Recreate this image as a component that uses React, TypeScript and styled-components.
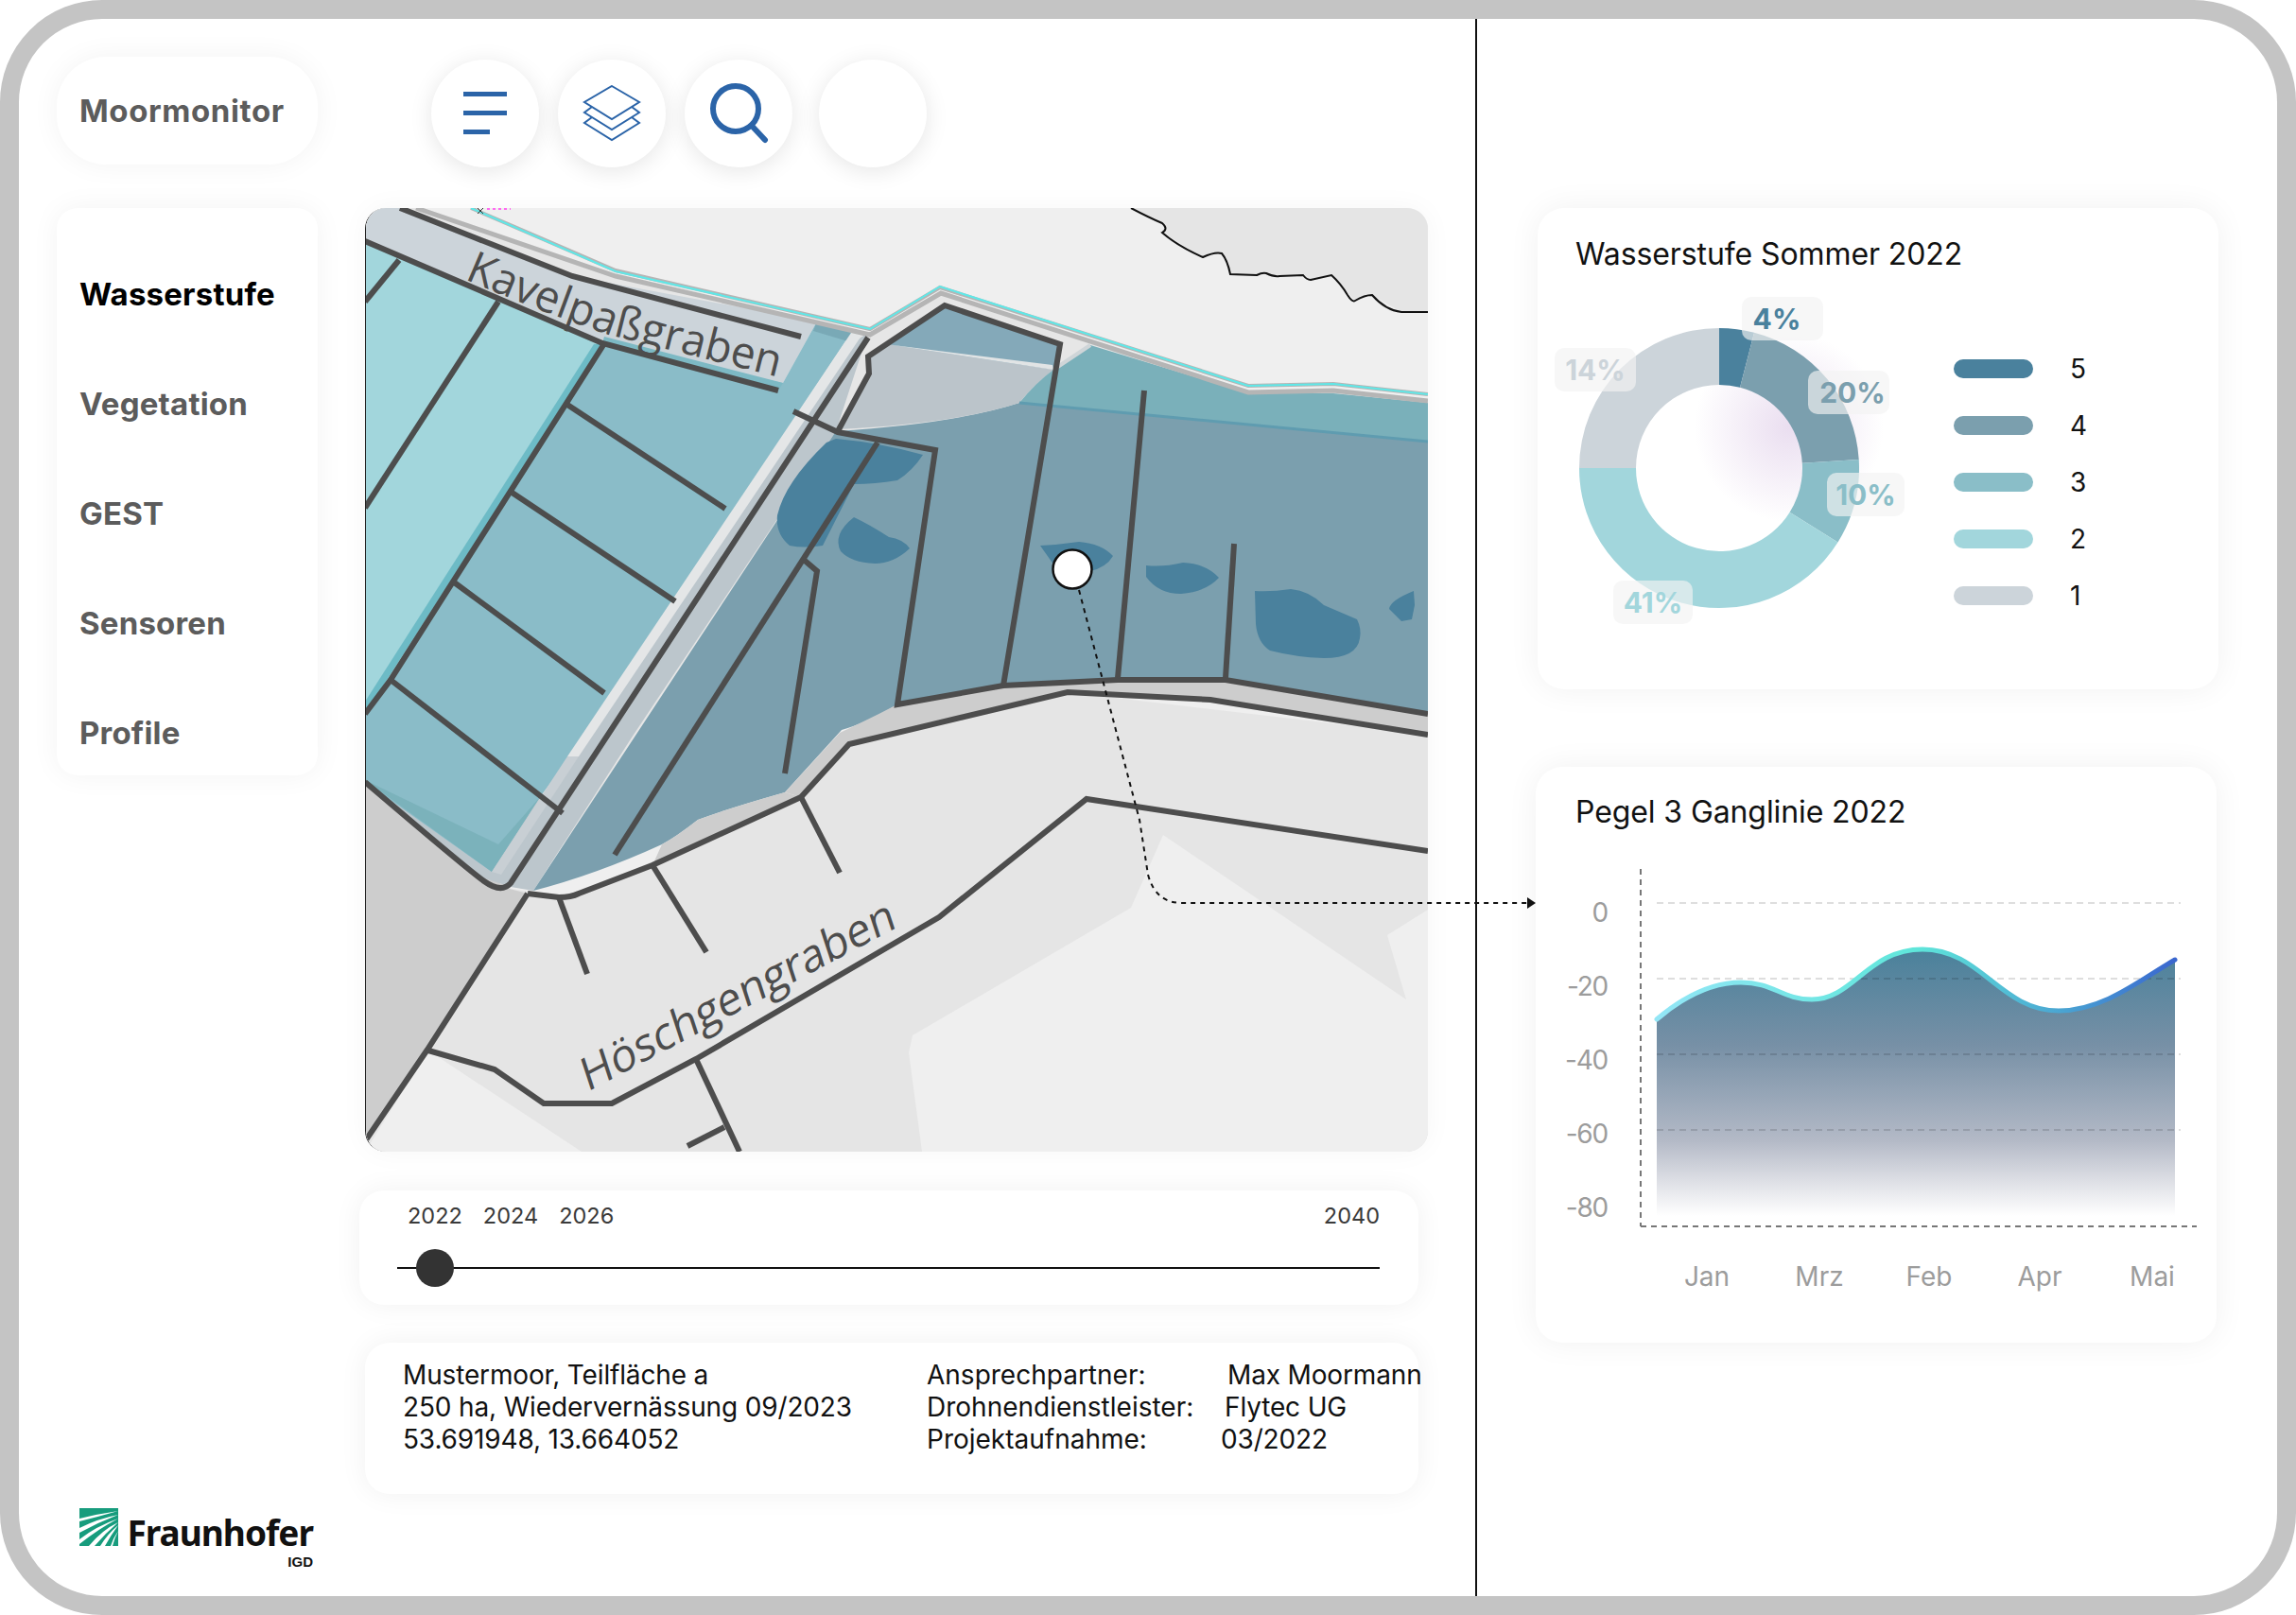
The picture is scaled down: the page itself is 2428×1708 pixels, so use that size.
import React from 'react';
import styled, { createGlobalStyle } from 'styled-components';

const GlobalStyle = createGlobalStyle`
  html, body {
    margin: 0;
    padding: 0;
    background: #fff;
  }
  body {
    width: 2428px;
    height: 1708px;
    overflow: hidden;
    font-family: 'Inter', 'Liberation Sans', sans-serif;
  }
`;

const Frame = styled.div`
  position: relative;
  box-sizing: border-box;
  display: flex;
  width: 2428px;
  height: 1708px;
  background: #fff;
  border: 20px solid #c4c4c4;
  border-radius: 108px;
  overflow: hidden;
`;

const LeftPane = styled.div`
  box-sizing: border-box;
  display: flex;
  flex: none;
  width: 1542px;
  height: 100%;
  padding: 40px 0 0 40px;
  border-right: 2px solid #111;
`;

const Sidebar = styled.aside`
  display: flex;
  flex-direction: column;
  flex: none;
  width: 276px;
`;

const BrandPill = styled.div`
  display: flex;
  align-items: center;
  height: 114px;
  padding-left: 24px;
  background: #fff;
  border-radius: 52px;
  box-shadow: 0 0 30px rgba(0, 0, 0, 0.05);
  color: #5c5c5c;
  font-size: 33px;
  font-weight: 700;
  letter-spacing: 0.6px;
`;

const NavCard = styled.nav`
  box-sizing: border-box;
  display: flex;
  flex-direction: column;
  justify-content: space-between;
  height: 600px;
  margin-top: 46px;
  padding: 68px 0 22px 24px;
  background: #fff;
  border-radius: 22px;
  box-shadow: 0 0 30px rgba(0, 0, 0, 0.05);
`;

const NavItem = styled.a<{ $active?: boolean }>`
  color: ${(p) => (p.$active ? '#000' : '#5c5c5c')};
  font-size: 33px;
  font-weight: 700;
  line-height: 46px;
  letter-spacing: 0.2px;
`;

const LogoBlock = styled.div`
  display: flex;
  flex-direction: column;
  align-items: flex-end;
  width: 249px;
  margin: auto 0 29px 22px;
`;

const LogoRow = styled.div`
  display: flex;
  align-items: flex-end;
  gap: 10px;
`;

const LogoWord = styled.span`
  color: #111;
  font-family: 'Noto Sans', 'Liberation Sans', sans-serif;
  font-size: 37px;
  font-weight: 700;
  line-height: 28px;
  letter-spacing: -1px;
`;

const LogoSub = styled.span`
  margin-top: 9px;
  color: #111;
  font-family: 'Liberation Sans', sans-serif;
  font-size: 15px;
  font-weight: 700;
  line-height: 15px;
`;

const Main = styled.main`
  display: flex;
  flex-direction: column;
  flex: none;
  width: 1130px;
  margin-left: 50px;
  padding-top: 3px;
`;

const Toolbar = styled.div`
  display: flex;
  gap: 20px;
  margin-left: 70px;
`;

const RoundButton = styled.button<{ $gapBefore?: number }>`
  display: flex;
  align-items: center;
  justify-content: center;
  width: 114px;
  height: 114px;
  margin-left: ${(p) => p.$gapBefore ?? 0}px;
  padding: 0;
  background: #fff;
  border: none;
  border-radius: 50%;
  box-shadow: 0 4px 24px rgba(0, 0, 0, 0.1);
`;

const MapCard = styled.div`
  width: 1124px;
  height: 998px;
  margin-top: 43px;
  border-radius: 22px;
  overflow: hidden;
  border-left: 1px solid #222;
  box-sizing: border-box;
  box-shadow: 0 0 30px rgba(0, 0, 0, 0.04);

  svg {
    display: block;
  }
`;

const SliderCard = styled.div`
  box-sizing: border-box;
  width: 1120px;
  height: 121px;
  margin: 41px 0 0 -6px;
  padding: 13px 41px 0 40px;
  background: #fff;
  border-radius: 26px;
  box-shadow: 0 0 30px rgba(0, 0, 0, 0.06);
`;

const YearRow = styled.div`
  display: flex;
  gap: 22px;
  padding-left: 11px;
  color: #3a3a3a;
  font-size: 23.5px;
  line-height: 28px;
`;

const YearEnd = styled.span`
  margin-left: auto;
`;

const Track = styled.div`
  position: relative;
  height: 2px;
  margin-top: 40px;
  background: #111;
`;

const Thumb = styled.div`
  position: absolute;
  top: -19px;
  left: 20px;
  width: 40px;
  height: 40px;
  background: #333;
  border-radius: 50%;
`;

const InfoCard = styled.div`
  box-sizing: border-box;
  display: flex;
  width: 1114px;
  height: 160px;
  margin-top: 40px;
  padding: 17px 0 0 40px;
  background: #fff;
  border-radius: 26px;
  box-shadow: 0 0 30px rgba(0, 0, 0, 0.06);
  color: #111;
  font-size: 28px;
  line-height: 34px;
  letter-spacing: -0.15px;
  white-space: nowrap;
`;

const InfoColumn = styled.div`
  flex: none;
  width: 554px;
`;

const InfoRow = styled.div`
  display: flex;
`;

const InfoLabel = styled.span`
  flex: none;
  width: 315px;
  letter-spacing: 0;
`;

const InfoValue = styled.span<{ $shift: number }>`
  margin-left: ${(p) => p.$shift}px;
`;

const RightPane = styled.div`
  display: flex;
  flex-direction: column;
  flex: 1;
  padding: 200px 0 0 64px;
`;

const PanelTitle = styled.h2`
  margin: 0;
  color: #111;
  font-size: 32px;
  font-weight: 400;
  line-height: 40px;
  letter-spacing: -0.1px;
`;

const DonutCard = styled.section`
  box-sizing: border-box;
  width: 720px;
  height: 509px;
  padding: 29px 0 0 40px;
  background: #fff;
  border-radius: 28px;
  box-shadow: 0 0 34px rgba(0, 0, 0, 0.06);
`;

const DonutRow = styled.div`
  display: flex;
  gap: 46px;
  margin: 25px 0 0 -22px;
`;

const DonutWrap = styled.div`
  position: relative;
  flex: none;
  width: 376px;
  height: 346px;

  svg {
    display: block;
  }
`;

const PercentChip = styled.span<{ $x: number; $y: number; $w: number; $color: string; $nudge: number }>`
  position: absolute;
  left: ${(p) => p.$x}px;
  top: ${(p) => p.$y}px;
  box-sizing: border-box;
  display: flex;
  align-items: center;
  justify-content: center;
  width: ${(p) => p.$w}px;
  height: 46px;
  padding-left: ${(p) => Math.max(p.$nudge, 0)}px;
  padding-right: ${(p) => Math.max(-p.$nudge, 0)}px;
  background: rgba(243, 243, 243, 0.66);
  border-radius: 10px;
  color: ${(p) => p.$color};
  font-size: 30px;
  font-weight: 700;
`;

const Legend = styled.ul`
  display: flex;
  flex-direction: column;
  margin: 46px 0 0;
  padding: 0;
  list-style: none;
`;

const LegendRow = styled.li`
  display: flex;
  align-items: center;
  gap: 39px;
  height: 60px;
  color: #111;
  font-size: 28px;
`;

const LegendSwatch = styled.span<{ $color: string }>`
  width: 84px;
  height: 20px;
  background: ${(p) => p.$color};
  border-radius: 10px;
`;

const LineCard = styled.section`
  box-sizing: border-box;
  width: 720px;
  height: 609px;
  margin: 82px 0 0 -2px;
  padding: 28px 0 0 42px;
  background: #fff;
  border-radius: 28px;
  box-shadow: 0 0 34px rgba(0, 0, 0, 0.06);

  svg {
    display: block;
    margin: 20px 0 0 -42px;
  }
`;

const ChartLabel = styled.text<{ $tick?: boolean }>`
  fill: #9c9c9c;
  font-family: 'Inter', 'Liberation Sans', sans-serif;
  font-size: 28px;
  letter-spacing: ${(p) => (p.$tick ? '-1.2px' : '0')};
`;

const MapLabel = styled.text`
  fill: #4d4d4d;
  font-family: 'Open Sans', 'Noto Sans', sans-serif;
  font-size: 47px;
`;

const ConnectorLayer = styled.svg`
  position: absolute;
  top: -20px;
  left: -20px;
  pointer-events: none;
`;

const DITCH = '#4d4d4d';

const ditchLines = [
  '423,220 605,292 847,356',
  '386,255 637,363 823,413',
  '422,275 386,319',
  '527,319 386,537',
  '638,365 413,719 386,755',
  '600,428 767,538',
  '540,520 714,636',
  '479,615 639,733',
  '413,719 595,860',
  '839,435 886,457 989,476 949,745 1061,725 1182,719 1296,719 1510,755',
  '886,456 919,395 918,377 999,323 1121,364 1061,725',
  '928,468 650,904',
  '850,592 864,604 830,818',
  '1210,413 1182,717',
  '1305,575 1296,717',
  '591,949 621,1030',
  '690,915 747,1007',
  '847,843 888,923',
  '736,1120 782,1218',
  '766,1192 727,1212',
];

const MapDrawing: React.FC = () => (
  <svg width={1123} height={998} viewBox="387 220 1123 998">
    {/* base land */}
    <rect x={386} y={220} width={1124} height={998} fill="#efefef" />
    <path
      d="M1196 220 L1231 238 L1229 246 L1272 272 Q1285 266 1292 268 L1301 290 L1329 291 L1339 289 L1353 292 L1378 291 L1386 296 L1408 291 L1433 318 L1451 312 L1482 330 L1510 330 L1510 220 Z"
      fill="#e5e5e5"
    />
    <path
      d="M1196 220 Q1215 230 1229 236 Q1236 242 1229 246 Q1245 260 1272 272 Q1285 266 1292 268 Q1298 275 1301 290 L1329 291 Q1335 288 1339 289 Q1347 293 1353 292 L1378 291 Q1382 296 1386 296 L1408 291 Q1418 300 1425 312 Q1430 320 1433 318 Q1443 312 1451 312 Q1465 328 1482 330 L1510 330"
      fill="none"
      stroke="#111"
      strokeWidth={2}
    />

    {/* lower land and pale patches */}
    <path
      d="M386 827 L537 939 L591 949 L612 945 L847 843 L898 787 L1129 732 L1510 777 L1510 1218 L386 1218 Z"
      fill="#e5e5e5"
    />
    <path d="M1230 883 L1487 1057 L1467 989 L1510 962 L1510 1218 L975 1218 L961 1113 L965 1095 L1196 960 Z" fill="#efefef" />
    <path d="M453 1111 L615 1218 L386 1218 Z" fill="#efefef" />
    <path d="M1186 738 L1280 742 L1410 763 L1510 777 L1510 740 L1186 720 Z" fill="#cdcdcd" />
    <path d="M386 827 L535 939 L558 945 L452 1110 L386 1207 Z" fill="#cdcdcd" />

    {/* river margin */}
    <path d="M440 220 L651 292 L920 352 L995 309 L1320 414 L1410 412 L1510 423 L1510 470 L900 640 L540 938 L386 827 L386 220 Z" fill="#e6e6e6" />

    {/* strip below the first ditch */}
    <path d="M386 220 L423 220 L605 292 L864 340 L828 405 L637 363 L386 255 Z" fill="#ccd4da" />

    {/* road along the main ditch */}
    <path d="M898 365 L918 352 L884 456 L668 780 L564 942 L540 938 L500 925 L386 827 L574 843 Z" fill="#bcc6cc" />

    {/* fields left of the road */}
    <path d="M386 255 L637 363 L386 755 Z" fill="#a2d6dc" />
    <path d="M638 364 L828 405 L864 340 L900 352 L603 800 L571 843 L520 922 L386 827 L386 755 Z" fill="#8abcc8" />
    <path d="M386 825 L527 893 L571 843 L520 922 Z" fill="#7bb2bb" />
    <path d="M386 755 L638 364 L628 364 L386 742 Z" fill="#60b4c0" opacity={0.8} />
    <path d="M637 363 L823 413 L828 405 L639 356 Z" fill="#7db9c4" />
    <path d="M864 340 L912 352 L900 362 L860 350 Z" fill="#79a9b6" />
    <path d="M900 352 L913 352 L612 800 L600 800 Z" fill="#e4e6e7" />
    <path d="M600 800 L612 800 L530 925 L520 922 Z" fill="#c8cfd4" />

    {/* main field */}
    <path
      d="M1078 426 L1510 467 L1510 755 L1296 719 L1182 719 L1061 726 L949 745 Q915 765 890 772 L830 838 Q770 855 738 867 Q715 885 700 893 Q630 925 564 942 L884 456 Q1010 448 1078 426 Z"
      fill="#7b9fae"
    />
    <path d="M847 843 L830 838 Q770 855 738 867 Q715 885 700 893 L690 915 Z" fill="#cdcdcd" />
    <path d="M949 745 L1061 726 L1182 719 L1296 719 L1510 755 L1510 777 L1280 740 L1129 732 L898 787 L847 843 L830 838 L888 775 Q920 760 949 745 Z" fill="#cdcdcd" />

    {/* upper field, wedge and teal band */}
    <path d="M999 323 L1121 364 L1114 391 L937 366 L918 378 Z" fill="#84a9b9" />
    <path d="M918 378 L919 395 L886 454 Q1010 448 1078 426 Q1090 410 1114 391 L937 364 Z" fill="#bbc4ca" />
    <path d="M937 364 L1114 391 L1113 386 Z" fill="#e1e4e5" />
    <path d="M1153 365 L1320 416 L1410 416 L1510 426 L1510 467 L1078 426 Q1095 405 1114 391 Z" fill="#7ab0ba" />
    <path d="M1078 426 L1510 467" stroke="#5f9cb0" strokeWidth={3} fill="none" />
    <path d="M1114 391 L1153 365" stroke="#cfd5d8" strokeWidth={4} fill="none" />

    {/* wet patches */}
    <g fill="#4a819d">
      <path d="M884 464 Q930 468 976 481 Q965 498 949 508 Q925 512 903 512 L870 577 Q850 580 835 577 Q820 565 822 545 Q830 510 874 468 Z" />
      <path d="M903 547 Q920 555 940 568 Q955 570 962 580 Q945 596 925 596 Q900 595 889 583 Q880 565 903 547 Z" />
      <path d="M1100 577 Q1120 576 1141 573 Q1165 575 1177 588 Q1170 600 1153 604 Q1125 610 1112 594 Z" />
      <path d="M1212 598 Q1230 600 1251 595 Q1275 596 1289 611 Q1275 626 1249 628 Q1225 628 1212 610 Z" />
      <path d="M1327 625 Q1345 626 1365 623 Q1385 625 1400 640 L1435 655 Q1440 665 1438 675 Q1435 696 1400 696 Q1370 695 1343 688 Q1330 680 1328 660 Z" />
      <path d="M1495 625 L1496 640 L1493 655 L1482 657 L1469 644 Q1470 635 1495 625 Z" />
    </g>

    {/* river edge */}
    <polyline points="440,220 651,292 920,354 995,310 1320,415 1410,413 1510,424" fill="none" stroke="#b5b5b5" strokeWidth={5} />
    <polyline points="498,220 651,286 920,348 994,304 1320,408 1410,406 1510,417" fill="none" stroke="#b5b5b5" strokeWidth={4} />
    <polyline points="498,220 651,287 920,348 994,303 1320,408 1410,406 1510,417" fill="none" stroke="#5fe8e8" strokeWidth={2} />
    <path d="M515 221 H540" stroke="#ff6bf0" strokeWidth={2} strokeDasharray="3 3" />
    <path d="M505 220 L511 226 M511 220 L505 226" stroke="#333" strokeWidth={1} />

    {/* ditches */}
    <g fill="none" stroke={DITCH} strokeWidth={6}>
      {ditchLines.map((points) => (
        <polyline key={points} points={points} />
      ))}
      <path d="M918 357 L540 934 Q530 945 512 932 Q495 920 386 827" strokeLinejoin="round" />
      <path d="M558 945 L452 1110 L386 1207" />
      <path d="M558 945 L591 949 Q604 949 612 945 L690 915 L847 843 L898 787 L1129 732 L1280 740 L1510 777" />
      <path d="M453 1111 L523 1131 L575 1167 L647 1167 L736 1120 L993 970 L1149 845 L1510 900" />
    </g>

    <MapLabel>
      <textPath href="#kavel-line" textLength={348} lengthAdjust="spacingAndGlyphs">
        Kavelpaßgraben
      </textPath>
    </MapLabel>
    <MapLabel
      transform="translate(621 1155) rotate(-28) skewX(-10)"
      textLength={372}
      lengthAdjust="spacingAndGlyphs"
    >
      Höschgengraben
    </MapLabel>
    <defs>
      <path id="kavel-line" d="M491 295 Q560 325 640 353 L836 402" fill="none" />
    </defs>
  </svg>
);

const polar = (r: number, deg: number) => {
  const a = ((deg - 90) * Math.PI) / 180;
  return { x: 1818 + r * Math.cos(a), y: 495 + r * Math.sin(a) };
};

const ringSlice = (from: number, to: number, outer = 148, inner = 88) => {
  const a = polar(outer, from);
  const b = polar(outer, to);
  const c = polar(inner, to);
  const d = polar(inner, from);
  const large = to - from > 180 ? 1 : 0;
  return `M${a.x} ${a.y} A${outer} ${outer} 0 ${large} 1 ${b.x} ${b.y} L${c.x} ${c.y} A${inner} ${inner} 0 ${large} 0 ${d.x} ${d.y} Z`;
};

const slices = [
  { from: 0, to: 14.5, color: '#4a819d' },
  { from: 14.5, to: 86.5, color: '#7b9fae' },
  { from: 86.5, to: 122, color: '#8abec8' },
  { from: 122, to: 270, color: '#a2d6dc' },
  { from: 270, to: 360, color: '#ccd4da' },
];

const chips = [
  { label: '4%', x: 198, y: 0, w: 86, color: '#4a819d', nudge: -12 },
  { label: '20%', x: 268, y: 78, w: 86, color: '#7b9fae', nudge: 8 },
  { label: '10%', x: 288, y: 186, w: 82, color: '#8abec8', nudge: 0 },
  { label: '41%', x: 62, y: 300, w: 84, color: '#a2d6dc', nudge: 0 },
  { label: '14%', x: 0, y: 54, w: 86, color: '#ccd4da', nudge: 0 },
];

const legendItems = [
  { label: '5', color: '#4a819d' },
  { label: '4', color: '#7b9fae' },
  { label: '3', color: '#8abec8' },
  { label: '2', color: '#a2d6dc' },
  { label: '1', color: '#ccd4da' },
];

const curve = 'M1752 1078 C1785 1050 1815 1039 1841 1039 C1875 1039 1885 1057 1916 1057 C1960 1057 1975 1004 2033 1004 C2095 1004 2115 1069 2177 1069 C2225 1069 2265 1035 2300 1015';

const HydroChart: React.FC = () => (
  <svg width={720} height={492} viewBox="1624 899 720 492">
    <defs>
      <linearGradient id="area-fill" x1="0" y1="0" x2="0" y2="1">
        <stop offset="0" stopColor="#4a819b" />
        <stop offset="0.36" stopColor="#7790a6" />
        <stop offset="0.72" stopColor="#b4bac7" />
        <stop offset="1" stopColor="#b9bbc8" stopOpacity={0} />
      </linearGradient>
      <linearGradient id="line-stroke" x1="0" y1="0" x2="1" y2="0">
        <stop offset="0" stopColor="#93e6f6" />
        <stop offset="0.5" stopColor="#5fe6da" />
        <stop offset="0.78" stopColor="#4aa5d2" />
        <stop offset="1" stopColor="#3a66cf" />
      </linearGradient>
    </defs>
    <path d={`${curve} L2300 1286 L1752 1286 Z`} fill="url(#area-fill)" />
    <g stroke="#000" strokeOpacity={0.13} strokeWidth={2} strokeDasharray="7 5">
      {[955, 1035, 1115, 1195].map((y) => (
        <line key={y} x1={1752} x2={2306} y1={y} y2={y} />
      ))}
    </g>
    <path d={curve} fill="none" stroke="url(#line-stroke)" strokeWidth={5} strokeLinecap="round" />
    <g stroke="#777" strokeWidth={2} strokeDasharray="6 5">
      <line x1={1735} x2={1735} y1={919} y2={1297} />
      <line x1={1735} x2={2323} y1={1297} y2={1297} />
    </g>
    {[
      ['0', 975],
      ['-20', 1053],
      ['-40', 1131],
      ['-60', 1209],
      ['-80', 1287],
    ].map(([label, y]) => (
      <ChartLabel key={label} $tick x={1700} y={y} textAnchor="end">
        {label}
      </ChartLabel>
    ))}
    {[
      ['Jan', 1805],
      ['Mrz', 1924],
      ['Feb', 2040],
      ['Apr', 2157],
      ['Mai', 2276],
    ].map(([label, x]) => (
      <ChartLabel key={label} x={x} y={1360} textAnchor="middle">
        {label}
      </ChartLabel>
    ))}
  </svg>
);

const App: React.FC = () => (
  <>
    <GlobalStyle />
    <Frame>
      <LeftPane>
        <Sidebar>
          <BrandPill>Moormonitor</BrandPill>
          <NavCard>
            <NavItem $active>Wasserstufe</NavItem>
            <NavItem>Vegetation</NavItem>
            <NavItem>GEST</NavItem>
            <NavItem>Sensoren</NavItem>
            <NavItem>Profile</NavItem>
          </NavCard>
          <LogoBlock>
            <LogoRow>
              <svg width={41} height={40} viewBox="0 0 41 40">
                <rect width={41} height={40} fill="#179c7d" />
                <g fill="#fff">
                  <path d="M41 3 Q20 6 0 11 L0 14 Q20 9 41 3 Z" />
                  <path d="M41 7 Q20 11 0 21 L0 26 Q20 15 41 7 Z" />
                  <path d="M41 11 Q18 19 0 33 L0 38 Q20 22 41 11 Z" />
                  <path d="M41 15 Q24 23 10 40 L16 40 Q28 26 41 15 Z" />
                  <path d="M41 18 Q30 27 22 40 L27 40 Q33 29 41 18 Z" />
                  <path d="M41 24 Q36 31 33 40 L35 40 Q37 32 41 24 Z" />
                </g>
              </svg>
              <LogoWord>Fraunhofer</LogoWord>
            </LogoRow>
            <LogoSub>IGD</LogoSub>
          </LogoBlock>
        </Sidebar>
        <Main>
          <Toolbar>
            <RoundButton aria-label="Menü">
              <svg width={46} height={46} viewBox="0 0 46 46" fill="#2b64a8">
                <rect x={0} y={0} width={46} height={5} />
                <rect x={0} y={20} width={46} height={5} />
                <rect x={0} y={40} width={28} height={5} />
              </svg>
            </RoundButton>
            <RoundButton aria-label="Ebenen">
              <svg width={62} height={60} viewBox="0 0 62 60" fill="none" stroke="#2b64a8" strokeWidth={2}>
                <path d="M31 1 L60 18 L31 36 L2 18 Z" />
                <path d="M10 23 L2 29 L31 47 L60 29 L52 23" />
                <path d="M10 34 L2 40 L31 58 L60 40 L52 34" />
              </svg>
            </RoundButton>
            <RoundButton aria-label="Suche">
              <svg width={70} height={64} viewBox="0 0 70 64" fill="none" stroke="#2b64a8" strokeWidth={6} strokeLinecap="round">
                <circle cx={32} cy={27} r={24} />
                <path d="M49 45 L63 60" />
              </svg>
            </RoundButton>
            <RoundButton $gapBefore={8} aria-label="Profil" />
          </Toolbar>
          <MapCard>
            <MapDrawing />
          </MapCard>
          <SliderCard>
            <YearRow>
              <span>2022</span>
              <span>2024</span>
              <span>2026</span>
              <YearEnd>2040</YearEnd>
            </YearRow>
            <Track>
              <Thumb />
            </Track>
          </SliderCard>
          <InfoCard>
            <InfoColumn>
              <div>Mustermoor, Teilfläche a</div>
              <div>250 ha, Wiedervernässung 09/2023</div>
              <div>53.691948, 13.664052</div>
            </InfoColumn>
            <div>
              <InfoRow>
                <InfoLabel>Ansprechpartner:</InfoLabel>
                <InfoValue $shift={3}>Max Moormann</InfoValue>
              </InfoRow>
              <InfoRow>
                <InfoLabel>Drohnendienstleister:</InfoLabel>
                <InfoValue $shift={0}>Flytec UG</InfoValue>
              </InfoRow>
              <InfoRow>
                <InfoLabel>Projektaufnahme:</InfoLabel>
                <InfoValue $shift={-4}>03/2022</InfoValue>
              </InfoRow>
            </div>
          </InfoCard>
        </Main>
      </LeftPane>
      <RightPane>
        <DonutCard>
          <PanelTitle>Wasserstufe Sommer 2022</PanelTitle>
          <DonutRow>
            <DonutWrap>
              <svg width={376} height={346} viewBox="1644 314 376 346">
                <defs>
                  <radialGradient id="donut-glow">
                    <stop offset="0" stopColor="#dcc8e6" stopOpacity={0.6} />
                    <stop offset="1" stopColor="#dcc8e6" stopOpacity={0} />
                  </radialGradient>
                </defs>
                <circle cx={1892} cy={452} r={100} fill="url(#donut-glow)" />
                {slices.map((s) => (
                  <path key={s.color} d={ringSlice(s.from, s.to)} fill={s.color} />
                ))}
              </svg>
              {chips.map((c) => (
                <PercentChip key={c.label} $x={c.x} $y={c.y} $w={c.w} $color={c.color} $nudge={c.nudge}>
                  {c.label}
                </PercentChip>
              ))}
            </DonutWrap>
            <Legend>
              {legendItems.map((item) => (
                <LegendRow key={item.label}>
                  <LegendSwatch $color={item.color} />
                  {item.label}
                </LegendRow>
              ))}
            </Legend>
          </DonutRow>
        </DonutCard>
        <LineCard>
          <PanelTitle>Pegel 3 Ganglinie 2022</PanelTitle>
          <HydroChart />
        </LineCard>
      </RightPane>
      <ConnectorLayer width={2428} height={1708} viewBox="0 0 2428 1708">
        <circle cx={1134} cy={602} r={20.5} fill="#fff" stroke="#111" strokeWidth={2.5} />
        <path
          d="M1141 624 L1205 867 L1214 925 Q1222 955 1250 955 L1616 955"
          fill="none"
          stroke="#111"
          strokeWidth={2}
          strokeDasharray="5 5"
        />
        <path d="M1615 949 L1624 955 L1615 961 Z" fill="#111" />
      </ConnectorLayer>
    </Frame>
  </>
);

export default App;
